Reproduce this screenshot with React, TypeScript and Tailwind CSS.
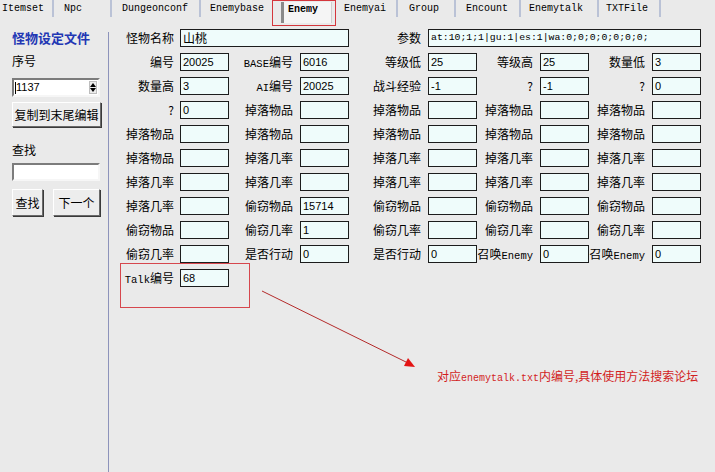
import React from "react";

function Lat({ children }: { children: React.ReactNode }) {
  return <span className="font-['Liberation_Mono',monospace] text-[10.5px]">{children}</span>;
}

type Field = { label: React.ReactNode; value?: string };

const rows: Field[][] = [
  [
    { label: "编号", value: "20025" },
    { label: <><Lat>BASE</Lat>编号</>, value: "6016" },
    { label: "等级低", value: "25" },
    { label: "等级高", value: "25" },
    { label: "数量低", value: "3" },
  ],
  [
    { label: "数量高", value: "3" },
    { label: <><Lat>AI</Lat>编号</>, value: "20025" },
    { label: "战斗经验", value: "-1" },
    { label: "?", value: "-1" },
    { label: "?", value: "0" },
  ],
  [
    { label: "?", value: "0" },
    { label: "掉落物品" },
    { label: "掉落物品" },
    { label: "掉落物品" },
    { label: "掉落物品" },
  ],
  [
    { label: "掉落物品" },
    { label: "掉落物品" },
    { label: "掉落物品" },
    { label: "掉落物品" },
    { label: "掉落物品" },
  ],
  [
    { label: "掉落物品" },
    { label: "掉落几率" },
    { label: "掉落几率" },
    { label: "掉落几率" },
    { label: "掉落几率" },
  ],
  [
    { label: "掉落几率" },
    { label: "掉落几率" },
    { label: "掉落几率" },
    { label: "掉落几率" },
    { label: "掉落几率" },
  ],
  [
    { label: "掉落几率" },
    { label: "偷窃物品", value: "15714" },
    { label: "偷窃物品" },
    { label: "偷窃物品" },
    { label: "偷窃物品" },
  ],
  [
    { label: "偷窃物品" },
    { label: "偷窃几率", value: "1" },
    { label: "偷窃几率" },
    { label: "偷窃几率" },
    { label: "偷窃几率" },
  ],
  [
    { label: "偷窃几率" },
    { label: "是否行动", value: "0" },
    { label: "是否行动", value: "0" },
    { label: <>召唤<Lat>Enemy</Lat></>, value: "0" },
    { label: <>召唤<Lat>Enemy</Lat></>, value: "0" },
  ],
];

function Label({ children, first }: { children: React.ReactNode; first?: boolean }) {
  return (
    <div
      className={
        (first ? "pr-[6px] " : "pr-[7px] ") +
        "text-right whitespace-nowrap text-[12px] leading-[18px] text-black font-['Noto_Sans_CJK_SC',sans-serif]"
      }
    >
      {children}
    </div>
  );
}

// text field; `font` carries the size + family so defaults never collide
function Box({
  value,
  span = "",
  font = "text-[11px] font-['Liberation_Sans',sans-serif]",
}: {
  value?: string;
  span?: string;
  font?: string;
}) {
  return (
    <div
      className={
        "h-[18px] border border-[#1c1c1c] bg-[#effcfb] pl-[2px] leading-[16px] text-black whitespace-nowrap overflow-hidden " +
        span +
        " " +
        font
      }
    >
      {value}
    </div>
  );
}

function TabItem({ name, className }: { name: string; className: string }) {
  return (
    <div className={"h-[17px] flex items-center text-[10px] text-black font-['Liberation_Mono',monospace] " + className}>
      {name}
    </div>
  );
}

function Tabs() {
  return (
    <div className="h-[26px] flex items-start">
      <TabItem name="Itemset" className="w-[54px] pl-[2px] border-r-2 border-[#bac2d6]" />
      <TabItem name="Npc" className="w-[58px] pl-[10px] border-r-2 border-[#bac2d6]" />
      <TabItem name="Dungeonconf" className="w-[89px] pl-[10px] border-r-2 border-[#bac2d6]" />
      <TabItem name="Enemybase" className="w-[71px] pl-[9px]" />
      <div className="w-[64px] h-[26px] border border-[#d4363c] pt-[1px] pl-[8px]">
        <div className="w-[51px] h-[21px] bg-[#f5f5f5] border-l-[3px] border-[#8a8a8a] border-r border-r-[#cfcfcf] pl-[4px] pt-[2px] text-[10px] leading-[12px] font-semibold text-black font-['Liberation_Mono',monospace]">
          Enemy
        </div>
      </div>
      <TabItem name="Enemyai" className="w-[62px] pl-[8px] border-r-2 border-[#bac2d6]" />
      <TabItem name="Group" className="w-[58px] pl-[11px] border-r-2 border-[#bac2d6]" />
      <TabItem name="Encount" className="w-[65px] pl-[10px] border-r-2 border-[#bac2d6]" />
      <TabItem name="Enemytalk" className="w-[78px] pl-[8px] border-r-2 border-[#bac2d6]" />
      <TabItem name="TXTFile" className="w-[62px] pl-[7px] border-r-2 border-[#bac2d6]" />
    </div>
  );
}

function Sunken({ children, className = "" }: { children?: React.ReactNode; className?: string }) {
  return (
    <div
      className={
        "bg-white border-2 border-t-[#7c7c7c] border-l-[#7c7c7c] border-b-[#f6f6f6] border-r-[#f6f6f6] " + className
      }
    >
      {children}
    </div>
  );
}

function Btn({ children, className = "" }: { children: React.ReactNode; className?: string }) {
  return (
    <div
      className={
        "flex items-center justify-center bg-[#ededed] border border-t-white border-l-white border-b-[#6a6a6a] border-r-[#6a6a6a] shadow-[1px_1px_0_#3a3a3a] text-[12px] text-black font-['Noto_Sans_CJK_SC',sans-serif] " +
        className
      }
    >
      {children}
    </div>
  );
}

function Sidebar() {
  return (
    <div className="w-[109px] flex">
      <div className="flex-1 pl-[12px] pt-[4px] flex flex-col items-start">
        <div className="text-[13px] leading-[16px] font-bold text-[#2237b4] font-['Noto_Sans_CJK_SC',sans-serif]">
          怪物设定文件
        </div>
        <div className="mt-[7px] text-[12px] leading-[16px] text-black font-['Noto_Sans_CJK_SC',sans-serif]">序号</div>
        <Sunken className="mt-[9px] w-[88px] h-[19px] flex items-center">
          <div className="w-px h-[12px] bg-black ml-[1px]" />
          <div className="flex-1 text-[11px] leading-[15px] text-black font-['Liberation_Sans',sans-serif]">1137</div>
          <div className="w-[8px] h-[13px] mr-[1px] flex flex-col items-center justify-center gap-[1px] bg-[#ececec] border border-[#bdbdbd]">
            <div className="w-0 h-0 border-l-[3px] border-r-[3px] border-b-[4px] border-l-transparent border-r-transparent border-b-black" />
            <div className="w-0 h-0 border-l-[3px] border-r-[3px] border-t-[4px] border-l-transparent border-r-transparent border-t-black" />
          </div>
        </Sunken>
        <Btn className="mt-[5px] w-[89px] h-[25px]">复制到末尾编辑</Btn>
        <div className="mt-[15px] text-[12px] leading-[16px] text-black font-['Noto_Sans_CJK_SC',sans-serif]">查找</div>
        <Sunken className="mt-[5px] w-[88px] h-[18px]" />
        <div className="mt-[8px] flex gap-[10px]">
          <Btn className="w-[31px] h-[27px]">查找</Btn>
          <Btn className="w-[47px] h-[27px]">下一个</Btn>
        </div>
      </div>
      <div className="w-px mt-[6px] bg-[#8d93bb]" />
    </div>
  );
}

function Form() {
  return (
    <div className="flex-1 pl-[5px] pt-[3px]">
      <div className="grid grid-cols-[66px_49px_71px_49px_79px_49px_63px_49px_63px_49px] auto-rows-[18px] gap-y-[6px]">
        <Label first>怪物名称</Label>
        <Box value="山桃" span="col-span-3" font="text-[12px] font-['Noto_Sans_CJK_SC',sans-serif]" />
        <Label>参数</Label>
        <Box
          value="at:10;1;1|gu:1|es:1|wa:0;0;0;0;0;0;0;"
          span="col-span-5"
          font="text-[9.8px] font-['Liberation_Mono',monospace]"
        />
        {rows.map((row, ri) =>
          row.map((f, ci) => (
            <React.Fragment key={ri + "-" + ci}>
              <Label first={ci === 0}>{f.label}</Label>
              <Box value={f.value} />
            </React.Fragment>
          ))
        )}
        <Label first>
          <Lat>Talk</Lat>编号
        </Label>
        <Box value="68" />
      </div>
    </div>
  );
}

export default function App() {
  return (
    <div className="relative w-[715px] h-[472px] overflow-hidden bg-[#eaeaea] font-['Liberation_Sans',sans-serif]">
      <Tabs />
      <div className="flex h-[446px]">
        <Sidebar />
        <Form />
      </div>

      {/* note box around the Talk field */}
      <div className="absolute left-[120px] top-[263px] w-[130px] h-[45px] border border-[#d6474d]" />

      {/* pointer arrow */}
      <svg className="absolute left-0 top-0" width="715" height="472" viewBox="0 0 715 472">
        <line x1="262" y1="291" x2="408" y2="363" stroke="#b42a2a" strokeWidth="1" />
        <polygon points="415,367 404,366 408,358" fill="#e41414" />
      </svg>

      <div className="absolute left-[437px] top-[368px] text-[12px] leading-[16px] text-[#d21e1e] whitespace-nowrap font-['Noto_Sans_CJK_SC',sans-serif]">
        对应<span className="font-['Liberation_Mono',monospace] text-[10px]">enemytalk.txt</span>内编号,具体使用方法搜索论坛
      </div>
    </div>
  );
}
